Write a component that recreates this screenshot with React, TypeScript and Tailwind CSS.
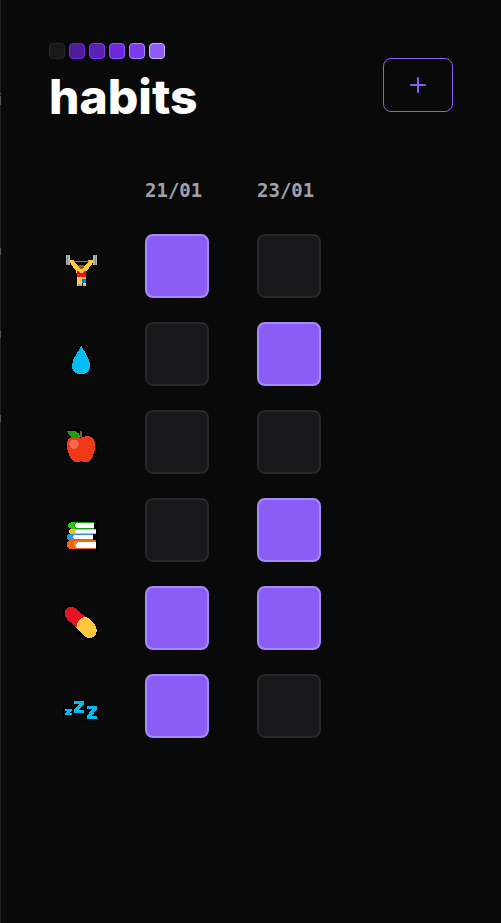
import { useState, type ReactNode } from "react";

const legend = [
  "bg-[#18181b] border-[#27272a]",
  "bg-[#4c1d95] border-[#6d28d9]",
  "bg-[#5b21b6] border-[#7c3aed]",
  "bg-[#6d28d9] border-[#8b5cf6]",
  "bg-[#7c3aed] border-[#a78bfa]",
  "bg-[#8b5cf6] border-[#c4b5fd]",
];

function Icon({ viewBox, outline, children }: { viewBox: string; outline: string; children: ReactNode }) {
  return (
    <svg viewBox={viewBox} className="block size-16" shapeRendering="crispEdges" aria-hidden="true">
      <path d={outline} fill="#000" stroke="#000" strokeWidth="13" strokeLinejoin="round" />
      {children}
    </svg>
  );
}

const LIFTER_BODY = "M45 45L57 45L61 55L73 66L87 66L97 55L101 45L114 45L111 57L94 79L93 96L93 123L66 123L66 96L64 79L47 57Z";
const DROP = "M79 33L97 64Q105 78 105 93Q105 118 78 118Q51 118 51 93Q51 78 60 64Z";
const APPLE = "M58 49Q70 49 78 55Q86 48 99 48Q121 51 121 78Q118 107 105 123Q97 128 78 124Q62 128 54 123Q39 107 35 78Q35 51 58 49Z";
const PILL = "M34 41Q47 29 61 39L84 60Q93 66 99 69L120 89Q130 105 121 122Q105 134 90 125L63 97L36 73Q24 56 34 41Z";
const ZZZ = "M30 72H51V78L42 84H51V90H30V84L39 78H30ZM57 48H87V57L71 75H87V84H57V75L73 57H57ZM96 63H126V72L110 93H126V102H96V93L111 72H96Z";

interface Habit {
  name: string;
  done: [boolean, boolean];
  icon: ReactNode;
}

const initialHabits: Habit[] = [
  {
    name: "Workout",
    done: [true, false],
    icon: (
      <Icon viewBox="-18 -33 192 192" outline={LIFTER_BODY + "M33 30h12v30h-12zM114 30h12v30h-12z"}>
        <path d={LIFTER_BODY} fill="#ffc83d" />
        <path d="M45 48h69v3h-69z" fill="#7d7d80" />
        <path d="M45 45h12v9h-12zM102 45h12v9h-12z" fill="#ffc83d" />
        <path d="M33 30h12v30h-12zM114 30h12v30h-12z" fill="#b5b5b8" />
        <path d="M36 30h3v30h-3zM120 30h3v30h-3z" fill="#85858a" />
        <path d="M66 78h6l3 6h9l3-6h6v18h-27z" fill="#e81224" />
        <path d="M72 60h15v9h-3v3h-9v-3h-3z" fill="#8e562e" />
        <path d="M81 102h12v12h-12z" fill="#0078d7" />
        <path d="M69 117h9v6h-9z" fill="#9a9a9a" />
        <path d="M81 114h3v9h-3z" fill="#000" />
      </Icon>
    ),
  },
  {
    name: "Drink water",
    done: [false, true],
    icon: (
      <Icon viewBox="-18 -39 192 192" outline={DROP}>
        <path d={DROP} fill="#00bcf2" />
      </Icon>
    ),
  },
  {
    name: "Eat fruit",
    done: [false, false],
    icon: (
      <Icon viewBox="-18 -30 192 192" outline={APPLE + "M36 33h27l18 3v18h-24z"}>
        <path d={APPLE} fill="#f03a17" />
        <circle cx="57" cy="73" r="14" fill="#f4694f" />
        <path d="M36 33H57Q72 36 78 52Q54 56 45 48Q38 42 36 33Z" fill="#16a110" />
        <path d="M75 33h6v27h-3v-9h-3z" fill="#8e562e" />
      </Icon>
    ),
  },
  {
    name: "Read",
    done: [false, true],
    icon: (
      <Icon viewBox="-18 -36 192 192" outline="M42 36h75v3h6v78h-81l-6-6v-36l6-18z">
        <path d="M48 36h69v3h-54v3h-3v9h3v3h54v3h-69z" fill="#16a110" />
        <path d="M48 36h12v6h-3v9h3v6h-12v-3h-6v-3h-3v-9h3v-3h6z" fill="#22cc14" />
        <path d="M63 39h54v15h-54v-3h-3v-9h3z" fill="#fff" />
        <path d="M45 57h78v3h-60v9h60v3h-78v-3h-3v-9h3z" fill="#ffb817" />
        <path d="M63 60h60v9h-60v-3h-3v-3h3z" fill="#fff" />
        <path d="M39 72h75v3h-57v12h57v3h-75v-3h-3v-12h3z" fill="#3294e8" />
        <path d="M57 75h57v12h-57v-3h-3v-6h3z" fill="#fff" />
        <path d="M42 90h81v6h-54v18h54v3h-81v-3h-3v-3h-3v-15h3v-3h3z" fill="#f7630c" />
        <path d="M60 93h12v3h-6v3h-3v9h3v6h-6v-3h-3v-15h3z" fill="#ff8a3c" />
        <path d="M69 96h54v18h-57v-3h-3v-9h3v-3h3z" fill="#fff" />
      </Icon>
    ),
  },
  {
    name: "Take medicine",
    done: [true, true],
    icon: (
      <Icon viewBox="-18 -27 192 192" outline={PILL}>
        <path d={PILL} fill="#ffc83d" />
        <path d="M34 41Q47 29 61 39L90 65Q81 67 72 76Q64 85 64 98L36 73Q24 56 34 41Z" fill="#e81224" />
      </Icon>
    ),
  },
  {
    name: "Sleep",
    done: [true, false],
    icon: (
      <Icon viewBox="-18 -33 192 192" outline="M30 72h21v18h-21zM57 48h30v36h-30zM96 63h30v39h-30z">
        <path d={ZZZ} fill="#00bcf2" />
      </Icon>
    ),
  },
];

export default function App() {
  const [habits, setHabits] = useState(initialHabits);

  const toggle = (row: number, day: number) =>
    setHabits((list) =>
      list.map((habit, i) =>
        i === row
          ? { ...habit, done: habit.done.map((d, j) => (j === day ? !d : d)) as [boolean, boolean] }
          : habit
      )
    );

  return (
    <main className="relative min-h-screen border-l border-[#202022] bg-[#09090a] px-12 pt-[43px] pb-12 font-['Inter',sans-serif] text-white">
      <svg className="absolute top-0 -left-px h-[430px] w-px" shapeRendering="crispEdges" aria-hidden="true">
        <path d="M0 93h1v1h-1zM0 96h1v9h-1zM0 248h1v7h-1zM0 331h1v7h-1zM0 415h1v7h-1z" fill="#55565a" />
      </svg>

      <header className="flex items-center justify-between">
        <div>
          <div className="flex gap-1">
            {legend.map((color) => (
              <span key={color} className={`size-4 rounded border ${color}`} />
            ))}
          </div>
          <h1 className="mt-2 text-5xl leading-[60px] font-extrabold">habits</h1>
        </div>
        <button
          type="button"
          aria-label="New habit"
          className="flex h-[54px] w-[70px] items-center justify-center rounded-lg border border-[#8b5cf6] text-[#8b5cf6]"
        >
          <svg viewBox="0 0 16 16" className="size-4" stroke="currentColor" strokeWidth="2" strokeLinecap="round" aria-hidden="true">
            <path d="M1 8h14M8 1v14" />
          </svg>
        </button>
      </header>

      <table className="mt-12 border-collapse">
        <thead>
          <tr className="h-[59px] align-top">
            <td />
            {["21/01", "23/01"].map((date) => (
              <th
                key={date}
                scope="col"
                className="p-0 text-left font-['DejaVu_Sans_Mono',monospace] text-[19px] leading-[30px] font-bold text-[#a1a1aa]"
              >
                {date}
              </th>
            ))}
          </tr>
        </thead>
        <tbody>
          {habits.map((habit, row) => (
            <tr key={habit.name}>
              <th scope="row" aria-label={habit.name} className="p-0 pr-8 pb-6">
                {habit.icon}
              </th>
              {habit.done.map((done, day) => (
                <td key={day} className="p-0 pr-12 pb-6">
                  <input
                    type="checkbox"
                    aria-label={`${habit.name}, day ${day + 1}`}
                    checked={done}
                    onChange={() => toggle(row, day)}
                    className="block size-16 appearance-none rounded-lg border-2 border-[#27272a] bg-[#18181b] checked:border-[#a78bfa] checked:bg-[#8b5cf6]"
                  />
                </td>
              ))}
            </tr>
          ))}
        </tbody>
      </table>
    </main>
  );
}
